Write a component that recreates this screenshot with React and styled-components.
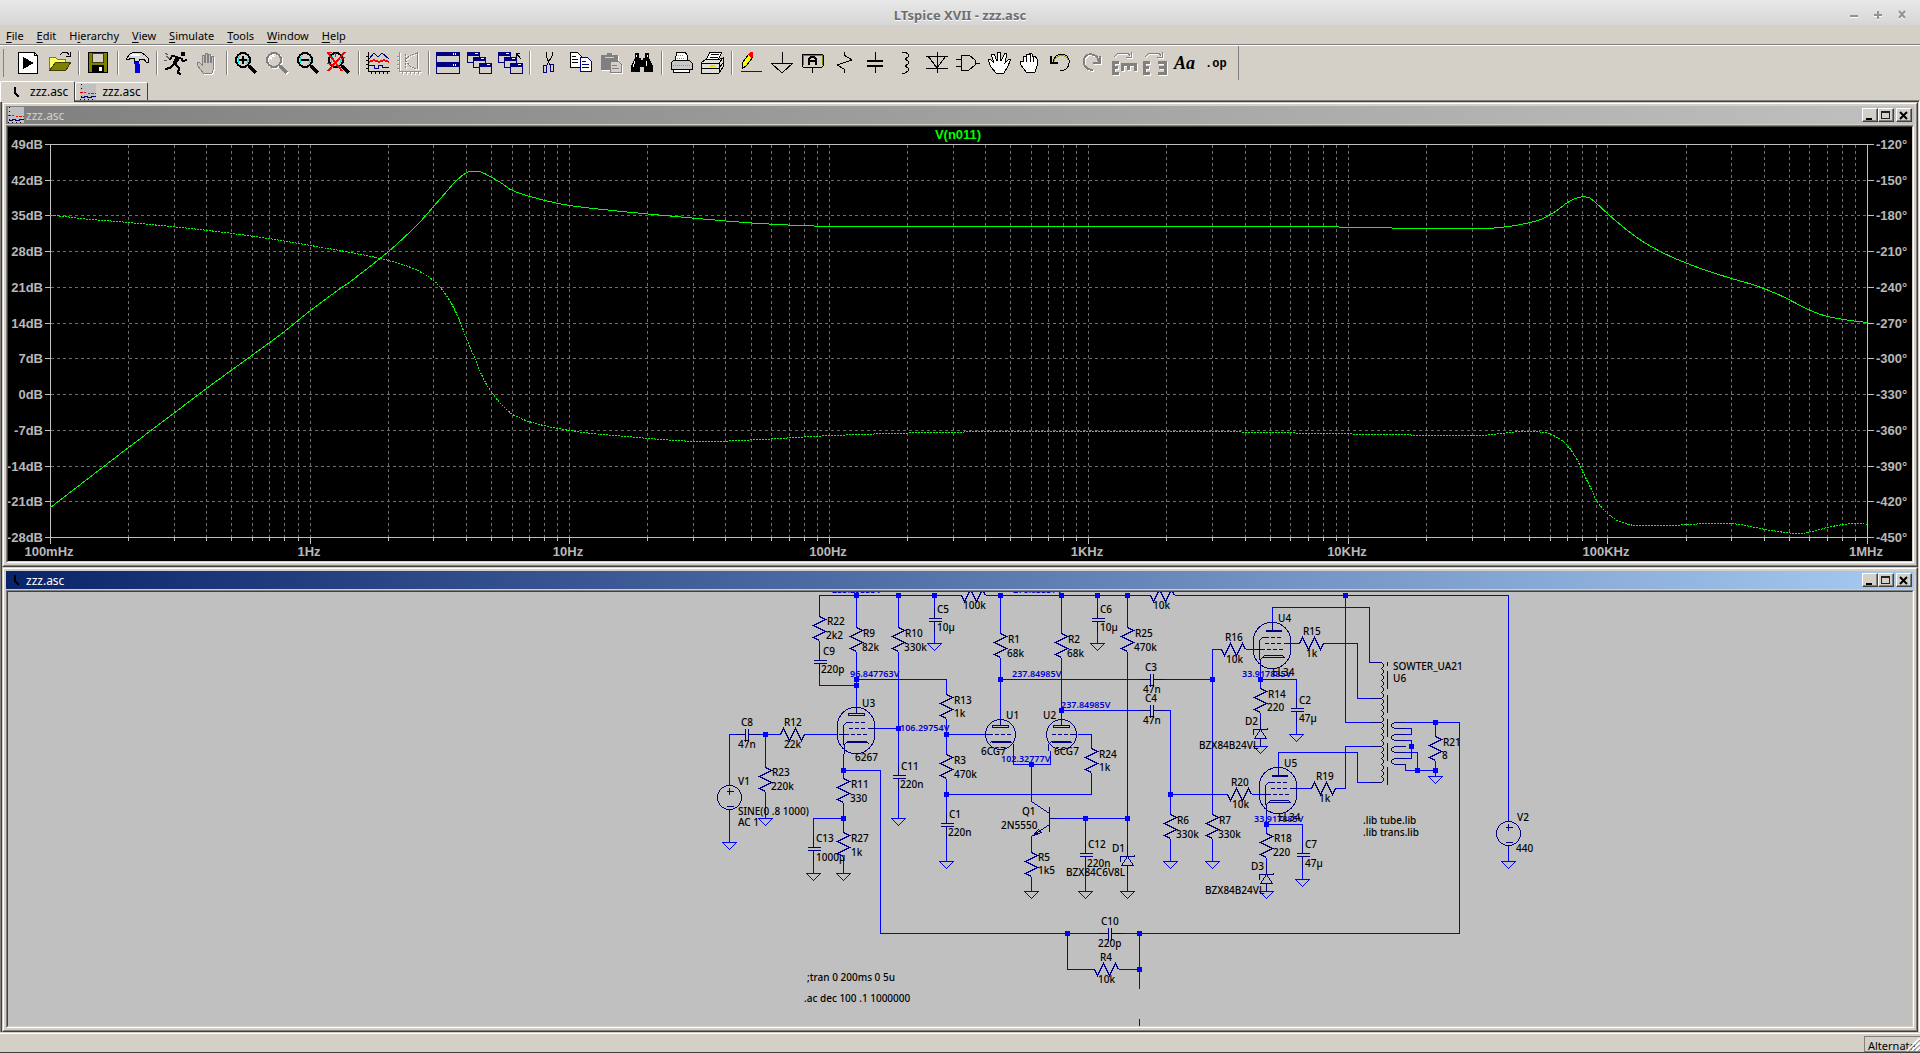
import React from "react";
import styled, { createGlobalStyle } from "styled-components";

const FACE = "#d4d0c8";
const SHADOW = "#808080";
const DARK = "#404040";

/* ---------- toolbar icons, each one drawn in a 24x24 box ---------- */

const Lens = ({ children }) => (
  <>
    <path d="M15 15L22 22" stroke="#000" strokeWidth="3" />
    <circle cx="9" cy="9" r="7" fill={FACE} stroke="#000" strokeWidth="2" />
    <path d="M5 12a5 5 0 0 1 1-7M12 13a5 5 0 0 0 2-5" stroke="#00e0e0" fill="none" />
    {children}
  </>
);

const Cascade = () => (
  <>
    {[[0, 1], [6, 6], [12, 12]].map(([x, y]) => (
      <g key={x}>
        <rect x={x} y={y} width="12" height="10" fill={FACE} stroke="#000080" />
        <rect x={x} y={y} width="12" height="4" fill="#000080" />
        <rect x={x + 8} y={y + 1} width="3" height="1" fill="#fff" />
      </g>
    ))}
  </>
);

const Axes = ({ color }) => (
  <path d="M2 1V20H24M0 5H2M0 9H2M0 13H2M0 17H2M5 20V23M9 20V23M13 20V23M17 20V23M21 20V23" stroke={color} fill="none" />
);

const icons = {
  run: (
    <>
      <path d="M2 1H18L21 4V22H2Z" fill="#fff" stroke="#000" />
      <path d="M18 1V4H21" fill="none" stroke="#000" />
      <path d="M7 6L18 12L7 18Z" fill="#000" />
    </>
  ),
  open: (
    <>
      <path d="M2 19V6H8L10 8H18V11H9L3 19Z" fill="#ffff60" stroke="#808000" />
      <path d="M3 19L9 11H24L19 19Z" fill="#808000" stroke="#404000" />
      <path d="M13 4L16 1H20L22 4M23 1V5H19" fill="none" stroke="#000" />
    </>
  ),
  save: (
    <>
      <rect x="2" y="1" width="19" height="20" fill="#808000" stroke="#000" />
      <rect x="6" y="2" width="11" height="9" fill={FACE} stroke="#404000" />
      <rect x="6" y="14" width="12" height="7" fill="#000" />
      <rect x="13" y="16" width="3" height="4" fill="#fff" />
    </>
  ),
  hammer: (
    <>
      <path d="M9 10H14V13H15V22H10V13H9Z" fill="#0000e0" />
      <path d="M1 8L5 3L9 1H16L20 4L23 7V11H21L19 8H15L14 10H9V7H6L3 9Z" fill="#d8d8d8" stroke="#000" />
      <path d="M6 4H15" stroke="#fff" strokeWidth="2" />
    </>
  ),
  runner: (
    <>
      <rect x="17" y="1" width="4" height="4" fill="#000" />
      <path d="M16 6L11 13M17 7L19 10L23 9M14 6L8 5L6 9" fill="none" stroke="#000" strokeWidth="2" />
      <path d="M14 6L10 13" stroke="#000" strokeWidth="4" />
      <path d="M11 13L15 17L14 22L17 23M10 13L6 17L1 18" fill="none" stroke="#000" strokeWidth="2" />
      <path d="M1 2L4 4M2 5L6 8M0 9H3" stroke="#606060" />
    </>
  ),
  halt: (
    <path
      d="M8 22L3 15L2 12L4 11L7 14V4H9V11H10V2H12V11H13V3H15V11H16V5H18V11L19 16L17 22Z"
      fill="#c8c4bc"
      stroke="#808080"
    />
  ),
  zoomIn: (
    <Lens>
      <path d="M9 5V13M5 9H13" stroke="#000" strokeWidth="2" />
    </Lens>
  ),
  pan: (
    <>
      <circle cx="9" cy="9" r="7" fill="none" stroke="#808080" strokeWidth="2" />
      <path d="M15 15L22 22" stroke="#808080" strokeWidth="3" />
      <path d="M5 8a4 4 0 0 1 4-4" stroke="#fff" fill="none" />
    </>
  ),
  zoomOut: (
    <Lens>
      <path d="M5 9H13" stroke="#000" strokeWidth="2" />
    </Lens>
  ),
  zoomFit: (
    <>
      <Lens />
      <path d="M1 2L15 20M18 1L1 20" stroke="#f00" strokeWidth="2" />
      <path d="M0 1H5M0 12L5 14M14 8L18 6M8 2V6" stroke="#f00" />
    </>
  ),
  plot: (
    <>
      <Axes color="#000" />
      <path d="M3 8L8 2L12 6L16 2L23 8" fill="none" stroke="#000080" />
      <path d="M3 11L8 9L13 11L18 9L23 11" fill="none" stroke="#f00" strokeWidth="2" />
      <path d="M3 14H8V17H12V14H16V16H23" fill="none" stroke="#000080" />
    </>
  ),
  smith: (
    <>
      <Axes color="#909090" />
      <path d="M20 2L14 4L8 9L14 16L20 18ZM20 2V18M8 3V17" fill="none" stroke="#808080" strokeDasharray="2 1" />
    </>
  ),
  tile: (
    <>
      <rect x="0" y="1" width="23" height="10" fill={FACE} stroke="#000080" />
      <rect x="0" y="12" width="23" height="10" fill={FACE} stroke="#000080" />
      <path d="M0 3H23M0 14H23" stroke="#000080" strokeWidth="4" />
      <path d="M17 3H21M17 14H21" stroke="#fff" strokeWidth="2" strokeDasharray="1 1" />
    </>
  ),
  cascade: <Cascade />,
  closeAll: (
    <>
      <Cascade />
      <path d="M23 8L18 2M18 6V2H22" fill="none" stroke="#000" />
    </>
  ),
  cut: (
    <>
      <path d="M9 1V5L13 14M15 1V5L10 14" stroke="#000" fill="none" />
      <ellipse cx="8" cy="18" rx="2" ry="4" fill="none" stroke="#000080" />
      <ellipse cx="15" cy="17" rx="2" ry="4" fill="none" stroke="#000080" />
    </>
  ),
  copy: (
    <>
      <path d="M2 1H9L13 5V16H2Z" fill="#fff" stroke="#000" />
      <path d="M4 5H8M4 8H10M4 11H10" stroke="#000" />
      <path d="M12 6H19L23 10V20H12Z" fill="#fff" stroke="#000080" />
      <path d="M14 10H18M14 13H21M14 16H21" stroke="#000080" />
    </>
  ),
  paste: (
    <>
      <path d="M2 4H8V2H13V4H19V19H2Z" fill="#808080" />
      <path d="M6 6H15" stroke={FACE} />
      <path d="M11 10H19L22 13V21H11Z" fill={FACE} stroke="#808080" />
      <path d="M13 14H18M13 17H20" stroke="#808080" />
    </>
  ),
  find: (
    <>
      <path d="M5 2H9V7H11V9H13V7H15V2H19V7L23 15V21H14V16H10V21H1V15L5 7Z" fill="#000" />
      <path d="M6 4V6M17 4V6M5 10L3 16M16 10V15" stroke="#fff" />
    </>
  ),
  print: (
    <>
      <path d="M6 9L8 1H16L18 4V9" fill="#fff" stroke="#000" />
      <path d="M2 12L5 9H20L23 12V18H2Z" fill="#c8c8c8" stroke="#000" />
      <path d="M4 18H20V21H4Z" fill="#fff" stroke="#000" />
      <path d="M9 4H15M8 7H16M4 14H21" stroke="#909090" strokeDasharray="1 1" />
    </>
  ),
  preview: (
    <>
      <path d="M6 9L10 1H22L18 9Z" fill="#fff" stroke="#000" />
      <path d="M11 3H19M10 6H18" stroke="#000" />
      <path d="M1 12L6 8H20L23 7V16L19 22H1Z" fill="#e0e0d8" stroke="#000" />
      <path d="M1 12H19V22M19 12L23 7M1 17H19L23 12" fill="none" stroke="#000" />
      <path d="M10 15H15" stroke="#e0e000" strokeWidth="2" />
    </>
  ),
  wire: (
    <>
      <path d="M3 12L10 3L14 6L7 15L3 18Z" fill="#ff0" stroke="#000" />
      <path d="M9 3L11 1H14V5L12 7Z" fill="#f00" />
      <path d="M2 20H23" stroke="#0000ff" />
    </>
  ),
  ground: <path d="M12 1V12M1 12H23L12 22Z" fill="none" stroke="#000" />,
  label: (
    <>
      <rect x="1" y="3" width="21" height="13" rx="1" fill={FACE} stroke="#000" />
      <path d="M2 14V4H21V14" fill="none" stroke="#808000" />
      <path d="M11 16V22" stroke="#000" />
      <path d="M8 14V8L10 6H13L15 8V14M8 10H15" stroke="#000" strokeWidth="2" fill="none" />
    </>
  ),
  resistor: <path d="M12 1V4L20 9L5 14L12 18V22" fill="none" stroke="#000" />,
  capacitor: (
    <>
      <path d="M12 1V9M12 15V22" stroke="#000" />
      <path d="M4 10H20M4 15H20" stroke="#000" strokeWidth="2" />
    </>
  ),
  inductor: <path d="M8 1H11L14 3V6L11 8L14 10V13L11 15L14 17V20L11 22H8" fill="none" stroke="#000" />,
  diode: <path d="M12 1V22M1 5H23M3 5L12 17L21 5M1 17H23" fill="none" stroke="#000" />,
  gate: <path d="M5 4H13L19 9V14L13 19H5ZM0 8H5M0 15H5M19 12H24" fill="none" stroke="#000" />,
  move: (
    <path
      d="M9 22L4 16L1 9L3 8L7 12L4 3H7L10 10L10 1H13L14 10L18 2H20L18 12L22 8H24L20 17L17 22Z"
      fill="#fff"
      stroke="#000"
    />
  ),
  drag: <path d="M8 21L3 14L2 10L5 10V5H8V3H11V2L14 3V5H17L19 8V15L17 21Z M8 5V11M12 3V11M15 5V11" fill="#fff" stroke="#000" />,
  undo: (
    <>
      <path d="M4 11C6 1 18 1 20 9C21 15 17 20 11 20" fill="none" stroke="#000" />
      <path d="M5 10C8 3 17 3 19 9" fill="none" stroke="#a0a000" />
      <path d="M2 5V12H9" fill="none" stroke="#000" strokeWidth="2" />
    </>
  ),
  redo: (
    <>
      <path d="M19 11C17 1 5 1 4 9C3 15 7 19 13 19" fill="none" stroke="#808080" strokeWidth="2" />
      <path d="M20 5V12H13" fill="none" stroke="#808080" strokeWidth="2" />
    </>
  ),
  rotate: (
    <>
      <path d="M3 6L7 2H17L19 5M20 1V6H15" fill="none" stroke="#808080" />
      <path d="M8 11H2V22H8M2 16H7M11 20V13H24V20M17 13V19" fill="none" stroke="#808080" strokeWidth="3" />
    </>
  ),
  mirror: (
    <>
      <path d="M3 6L7 2H17L19 5M20 1V6H15" fill="none" stroke="#808080" />
      <path d="M8 11H2V22H8M2 16H7M16 11H23V22H16M23 16H17" fill="none" stroke="#808080" strokeWidth="3" />
    </>
  ),
};

const toolGroups = [
  ["run", "open"],
  ["save"],
  ["hammer"],
  ["runner", "halt"],
  ["zoomIn", "pan", "zoomOut", "zoomFit"],
  ["plot", "smith"],
  ["tile", "cascade", "closeAll"],
  ["cut", "copy", "paste", "find"],
  ["print", "preview"],
  [
    "wire", "ground", "label", "resistor", "capacitor", "inductor", "diode", "gate",
    "move", "drag", "undo", "redo", "rotate", "mirror", "text", "directive",
  ],
];

const disabledTools = ["halt", "pan", "smith", "paste", "redo", "rotate", "mirror"];

const SchematicIcon = () => (
  <svg width="16" height="16" viewBox="0 0 16 16">
    <path d="M7 3V9L11 13" stroke="#000" strokeWidth="2" fill="none" shapeRendering="crispEdges" />
  </svg>
);

const PlotIcon = () => (
  <svg width="16" height="16" viewBox="0 0 16 16" shapeRendering="crispEdges">
    <rect width="16" height="16" fill="#c0c0c0" />
    <path d="M0 9L4 8L8 10L12 9L16 9" stroke="#f00" strokeDasharray="3 1" fill="none" />
    <path d="M1 13H4V12H7V13H11V12H16" stroke="#000080" fill="none" />
    <path d="M1 0V16M0 15H16" stroke="#000" strokeDasharray="1 3" />
  </svg>
);

/* ---------- waveform pane ---------- */

const PLOT = { left: 50, right: 1867, top: 144, bottom: 537 };
const GAIN_LABELS = [49, 42, 35, 28, 21, 14, 7, 0, -7, -14, -21, -28];
const FREQ_LABELS = ["100mHz", "1Hz", "10Hz", "100Hz", "1KHz", "10KHz", "100KHz", "1MHz"];

const gain = [
  [50, 507], [128, 447], [206, 388], [232, 369], [280, 334], [310, 310], [337, 290], [350, 281],
  [388, 251], [418, 223], [433, 206], [447, 190], [456, 180], [466, 172], [470, 171], [478, 171],
  [484, 173], [500, 182], [510, 189], [526, 195], [563, 204], [612, 210], [686, 217], [759, 223],
  [833, 226], [931, 226], [1102, 226], [1298, 226], [1420, 228], [1440, 228], [1482, 228],
  [1500, 227], [1520, 224], [1540, 219], [1555, 211], [1567, 202], [1578, 197], [1588, 197],
  [1595, 202], [1608, 214], [1627, 230], [1647, 244], [1670, 256], [1687, 263], [1703, 269],
  [1731, 278], [1755, 285], [1780, 295], [1810, 310], [1827, 316], [1850, 320], [1867, 322],
];

const phase = [
  [50, 215], [64, 216], [80, 218], [128, 222], [190, 228], [232, 233], [268, 238], [310, 245],
  [350, 252], [388, 260], [415, 269], [433, 280], [443, 291], [452, 305], [459, 320], [466, 338],
  [474, 357], [481, 374], [488, 387], [500, 403], [514, 415], [539, 424], [576, 431], [625, 436],
  [698, 441], [759, 439], [833, 435], [931, 432], [1041, 431], [1200, 431], [1322, 433],
  [1445, 435], [1480, 435], [1500, 433], [1520, 431], [1533, 431], [1548, 433], [1560, 439],
  [1567, 445], [1576, 458], [1583, 473], [1590, 487], [1596, 500], [1605, 511], [1615, 519],
  [1625, 523], [1635, 525], [1670, 525], [1687, 524], [1710, 523], [1730, 523], [1745, 525],
  [1765, 529], [1785, 532], [1800, 533], [1812, 531], [1827, 527], [1843, 524], [1857, 523],
  [1867, 524],
];

// Catmull-Rom through the sample points
const curve = (pts) => {
  let d = `M${pts[0][0]} ${pts[0][1]}`;
  for (let i = 0; i < pts.length - 1; i++) {
    const p0 = pts[i - 1] || pts[i];
    const p1 = pts[i];
    const p2 = pts[i + 1];
    const p3 = pts[i + 2] || p2;
    const s = (p2[0] - p1[0]) / 3;
    const m1 = (p2[1] - p0[1]) / (p2[0] - p0[0]);
    const m2 = (p3[1] - p1[1]) / (p3[0] - p1[0]);
    d += `C${p1[0] + s} ${p1[1] + m1 * s} ${p2[0] - s} ${p2[1] - m2 * s} ${p2[0]} ${p2[1]}`;
  }
  return d;
};

const decade = (PLOT.right - PLOT.left) / 7;
const rowStep = (PLOT.bottom - PLOT.top) / 11;

// lines run through pixel centres so that they stay one pixel wide
const PIXEL_CENTRE = "translate(0.5 0.5)";

const Waveform = () => {
  const minor = [];
  for (let d = 0; d < 7; d++) {
    for (let n = 2; n <= 10; n++) {
      minor.push(Math.round(PLOT.left + decade * (d + Math.log10(n))));
    }
  }
  minor.pop();

  return (
    <Drawing viewBox="8 127 1904 434" role="img" aria-label="V(n011) frequency response">
      <g shapeRendering="crispEdges" fill="none" transform={PIXEL_CENTRE}>
        <g stroke="#707070" strokeDasharray="3 3">
          {minor.map((x) => (
            <path key={x} d={`M${x} ${PLOT.top}V${PLOT.bottom}`} />
          ))}
          {GAIN_LABELS.slice(1, -1).map((v, i) => (
            <path key={v} d={`M${PLOT.left} ${Math.round(PLOT.top + rowStep * (i + 1))}H${PLOT.right}`} />
          ))}
        </g>
        <g stroke="#c0c0c0">
          <path d="M44 144H1873M44 537H1873M50 144V543M1867 144V543" />
          {minor.map((x) => (
            <path key={x} d={`M${x} 537v3`} />
          ))}
          {FREQ_LABELS.map((f, i) => (
            <path key={f} d={`M${Math.round(PLOT.left + decade * i)} 537v6`} />
          ))}
          {GAIN_LABELS.map((v, i) => (
            <path key={v} d={`M44 ${Math.round(PLOT.top + rowStep * i)}h6M1867 ${Math.round(PLOT.top + rowStep * i)}h6`} />
          ))}
        </g>
        <path d={curve(gain)} stroke="#00ff00" />
        <path d={curve(phase)} stroke="#00ff00" strokeDasharray="2 1" />
      </g>
      <AxisText x="958" y="139" textAnchor="middle" $trace>
        V(n011)
      </AxisText>
      {GAIN_LABELS.map((v, i) => (
        <React.Fragment key={v}>
          <AxisText x="43" y={Math.round(149 + rowStep * i)} textAnchor="end">
            {v}dB
          </AxisText>
          <AxisText x="1876" y={Math.round(149 + rowStep * i)}>
            {-120 - 30 * i}°
          </AxisText>
        </React.Fragment>
      ))}
      {FREQ_LABELS.map((f, i) => (
        <AxisText key={f} x={Math.round(PLOT.left + decade * i) - 1} y="556" textAnchor="middle">
          {f}
        </AxisText>
      ))}
    </Drawing>
  );
};

/* ---------- schematic pane ---------- */

const wires =
  "M819 616V595H961M985 595H1150M1174 595H1508V821M819 640V649M819 674V685H856" +
  "M856 595V627M856 651V707M898 595V627M898 651V764M898 789V818M934 595V607M934 631V643" +
  "M856 679H946V694M946 718V754M946 734H985M946 778V812M946 836V861M875 728H898" +
  "M729 785V734H736M758 734H780M804 734H837M765 734V767M765 791V818M729 809V842" +
  "M843 753V778M843 770H880V933M843 802V832M843 818H813V836M813 861V873M843 856V873" +
  "M1000 595V633M1000 657V718M1061 595V633M1061 657V718M1097 595V607M1097 631V643" +
  "M1127 595V627M1127 651V844M1127 873V891M1000 679H1140M1163 679H1212M1061 710H1140M1163 710H1170V814" +
  "M1170 838V861M1077 734H1091V748M1091 772V794H946M1013 750V764H1050V750M1031 764V801" +
  "M1055 818H1127M1031 836V852M1031 876V891M1085 818V842M1085 867V891" +
  "M1221 649H1212V814M1212 838V861M1245 649H1254M1272 622V607H1369V662H1372M1290 643H1299" +
  "M1323 643H1357V698H1370M1345 595V722H1370M1260 668V688M1260 679H1296V698M1296 722V734" +
  "M1260 712V718M1170 794H1227M1251 794H1260M1278 767V752H1357V782H1370M1296 788H1311" +
  "M1335 788H1345V746H1370M1266 813V833M1266 824H1302V842M1302 867V879M1266 857V862" +
  "M1405 722H1459V933H1120M1405 728H1411V734H1405M1405 740H1411V758H1405M1405 752H1417V770" +
  "M1405 764V770H1435M1435 722V736M1435 760V776M1508 845V861" +
  "M880 933H1098M1067 933V969H1094M1118 969H1139M1139 933V988M1139 1018V1026";

const junctions = [
  [856, 595], [898, 595], [934, 595], [1000, 595], [1061, 595], [1097, 595], [1127, 595], [1345, 595],
  [856, 679], [856, 685], [898, 728], [946, 734], [946, 794], [765, 734], [843, 770], [843, 818],
  [1000, 679], [1061, 710], [1031, 764], [1085, 818], [1127, 818], [1170, 794], [1212, 679],
  [1260, 679], [1266, 824], [1435, 722], [1411, 746], [1417, 770], [1435, 770],
  [1067, 933], [1139, 933], [1139, 969],
];

const grounds = [
  [934, 643], [1097, 643], [898, 818], [765, 818], [729, 842], [813, 873], [843, 873], [946, 861],
  [1031, 891], [1085, 891], [1127, 891], [1170, 861], [1212, 861], [1260, 746], [1296, 734],
  [1302, 879], [1266, 891], [1435, 776], [1508, 861],
];

// top of the zigzag
const resistors = [
  [819, 616], [856, 627], [898, 627], [946, 694], [946, 754], [765, 767], [843, 778], [843, 832],
  [1000, 633], [1061, 633], [1127, 627], [1091, 748], [1031, 852], [1170, 814], [1212, 814],
  [1260, 688], [1266, 833], [1435, 736],
];

// left end of the zigzag, third value is the first swing direction
const flatResistors = [
  [780, 734, -1], [961, 595, 1], [1150, 595, 1], [1221, 649, 1], [1299, 643, -1], [1227, 794, 1],
  [1311, 788, -1], [1094, 969, 1],
];

const capacitors = [
  [934, 618], [819, 660], [898, 775], [813, 847], [946, 823], [1097, 618], [1085, 853],
  [1296, 708], [1302, 853],
];

const flatCapacitors = [[745, 734], [1150, 679], [1150, 710], [1108, 933]];

const zeners = [[1127, 856], [1260, 729], [1266, 874]];

const labels = [
  [827, 625, "R22"], [826, 639, "2k2"], [823, 655, "C9"], [821, 673, "220p"], [863, 637, "R9"],
  [862, 651, "82k"], [905, 637, "R10"], [904, 651, "330k"], [937, 613, "C5"], [937, 631, "10µ"],
  [963, 609, "100k"], [954, 704, "R13"], [954, 717, "1k"], [954, 764, "R3"], [954, 778, "470k"],
  [949, 818, "C1"], [948, 836, "220n"], [901, 770, "C11"], [900, 788, "220n"], [862, 707, "U3"],
  [855, 761, "6267"], [851, 788, "R11"], [850, 802, "330"], [816, 842, "C13"], [816, 861, "1000µ"],
  [851, 842, "R27"], [851, 856, "1k"], [784, 726, "R12"], [784, 748, "22k"], [772, 776, "R23"],
  [771, 790, "220k"], [741, 726, "C8"], [738, 748, "47n"], [738, 785, "V1"],
  [738, 815, "SINE(0 .8 1000)"], [738, 826, "AC 1"],
  [1008, 643, "R1"], [1007, 657, "68k"], [1068, 643, "R2"], [1067, 657, "68k"], [1100, 613, "C6"],
  [1100, 631, "10µ"], [1135, 637, "R25"], [1134, 651, "470k"], [1153, 609, "10k"], [1145, 671, "C3"],
  [1143, 693, "47n"], [1145, 702, "C4"], [1143, 724, "47n"], [1006, 719, "U1"], [981, 755, "6CG7"],
  [1043, 719, "U2"], [1054, 755, "6CG7"], [1099, 758, "R24"], [1099, 771, "1k"], [1022, 815, "Q1"],
  [1001, 829, "2N5550"], [1038, 861, "R5"], [1038, 874, "1k5"], [1088, 848, "C12"],
  [1087, 867, "220n"], [1112, 852, "D1"], [1066, 876, "BZX84C6V8L"], [1177, 824, "R6"],
  [1176, 838, "330k"], [1219, 824, "R7"], [1218, 838, "330k"],
  [1225, 641, "R16"], [1226, 663, "10k"], [1278, 622, "U4"], [1303, 635, "R15"], [1306, 657, "1k"],
  [1272, 676, "EL34"], [1268, 698, "R14"], [1267, 711, "220"], [1299, 704, "C2"], [1299, 722, "47µ"],
  [1245, 725, "D2"], [1199, 749, "BZX84B24VL"], [1231, 786, "R20"], [1232, 808, "10k"],
  [1284, 767, "U5"], [1316, 780, "R19"], [1319, 802, "1k"], [1278, 821, "EL34"], [1274, 842, "R18"],
  [1273, 856, "220"], [1305, 848, "C7"], [1305, 867, "47µ"], [1251, 870, "D3"],
  [1205, 894, "BZX84B24VL"], [1443, 746, "R21"], [1442, 759, "8"], [1393, 670, "SOWTER_UA21"],
  [1393, 682, "U6"], [1363, 824, ".lib tube.lib"], [1363, 836, ".lib trans.lib"], [1517, 821, "V2"],
  [1516, 852, "440"], [1101, 925, "C10"], [1098, 947, "220p"], [1100, 961, "R4"], [1098, 983, "10k"],
  [807, 981, ";tran 0 200ms 0 5u"], [804, 1002, ".ac dec 100 .1 1000000"],
];

const voltages = [
  [832, 593, "253.29335V"], [1013, 593, "276.83337V"], [850, 677, "96.847763V"],
  [900, 731, "106.29754V"], [1012, 677, "237.84985V"], [1061, 708, "237.84985V"],
  [1001, 762, "102.32777V"], [1242, 677, "33.917885V"], [1254, 822, "33.917885V"],
];

const Triode = ({ x, flip }) => (
  <g transform={`translate(${x} 734)${flip ? " scale(-1 1)" : ""}`}>
    <circle r="15" />
    <path d="M0 -16V-9M-8 -9H8V-7H-8ZM-15 0H-12" />
    <path d="M-12 0H10" strokeDasharray="4 2" />
    <path d="M-9 7H10" strokeWidth="2" />
    <path d="M-9 7L-11 9M10 7L13 10V16" />
  </g>
);

const Pentode = ({ x, y, solidPlate }) => (
  <g transform={`translate(${x} ${y})`}>
    <rect x="-19" y="0" width="37" height="46" rx="18" />
    {solidPlate ? (
      <>
        <path d="M0 0V7M-10 35L-8 33H10L13 36M-11 35H12M-12 46V37L-10 35" />
        <path d="M-7 8H9" strokeWidth="2" />
      </>
    ) : (
      <>
        <path d="M0 0V6M-8 6H8V8H-8ZM-12 46V37L-10 35M10 34L13 37" />
        <path d="M-10 34H10" strokeWidth="2" />
      </>
    )}
    <path d="M-8 15H-10L-13 18V37M11 21H19M-18 27H-12" />
    <path d="M-8 15H10M-8 21H10M-12 27H10" strokeDasharray="4 2" />
  </g>
);

const Source = ({ x, y }) => (
  <g transform={`translate(${x} ${y})`}>
    <circle r="12" />
    <path d="M0 -10V-3M-3 -6H4M-3 9H4M0 12V15M0 -12V-15" />
  </g>
);

const Schematic = () => (
  <Drawing viewBox="8 592 1904 434" role="img" aria-label="Amplifier schematic">
    <g shapeRendering="crispEdges" fill="none" transform={PIXEL_CENTRE}>
      <path d={wires} stroke="#0000ff" />
      {grounds.map(([x, y]) => (
        <path key={`${x}-${y}`} d={`M${x - 7} ${y}H${x + 7}L${x} ${y + 7}Z`} stroke="#0000ff" />
      ))}
      <g stroke="#000080">
        {resistors.map(([x, y]) => (
          <path key={`${x}-${y}`} d={`M${x} ${y}l6 3l-12 6l12 6l-12 6l6 3`} />
        ))}
        {flatResistors.map(([x, y, s]) => (
          <path key={`${x}-${y}`} d={`M${x} ${y}l3 ${6 * s}l6 ${-12 * s}l6 ${12 * s}l6 ${-12 * s}l3 ${6 * s}`} />
        ))}
        {capacitors.map(([x, y]) => (
          <path key={`${x}-${y}`} d={`M${x} ${y - 11}V${y}M${x - 6} ${y}h13M${x - 6} ${y + 3}h13M${x} ${y + 3}v11`} />
        ))}
        {flatCapacitors.map(([x, y]) => (
          <path key={`${x}-${y}`} d={`M${x - 11} ${y}H${x}M${x} ${y - 6}v13M${x + 3} ${y - 6}v13M${x + 3} ${y}h11`} />
        ))}
        {zeners.map(([x, y]) => (
          <path
            key={x}
            d={`M${x} ${y - 12}V${y}M${x - 7} ${y + 5}V${y}H${x + 6}L${x + 8} ${y - 1}M${x} ${y}L${x - 6} ${y + 9}H${x + 6}ZM${x} ${y + 9}v8`}
          />
        ))}
        <Triode x={1000} />
        <Triode x={1061} flip />
        <Pentode x={856} y={707} />
        <Pentode x={1272} y={622} solidPlate />
        <Pentode x={1278} y={767} solidPlate />
        <Source x={729} y={797} />
        <Source x={1508} y={833} />
        {/* Q1 */}
        <path d="M1031 801L1049 813M1049 806V831M1049 818H1056M1049 824L1031 836M1033 835L1038 829L1041 832Z" />
        {/* output transformer */}
        <path d={`M1369 662H1381${"q4 3 0 6".repeat(20)}H1369M1369 698H1381M1369 722H1381M1369 746H1381`} />
        <path d="M1387 661v4M1387 670v18M1387 694v18M1387 718v18M1387 742v18M1387 766v18" />
        {[722, 734, 746, 758].map((y) => (
          <path key={y} d={`M1405 ${y}H1394L1391 ${y + 2}V${y + 4}L1394 ${y + 6}H1405`} />
        ))}
      </g>
    </g>
    {junctions.map(([x, y]) => (
      <rect key={`${x}-${y}`} x={x - 2} y={y - 2} width="5" height="5" fill="#0000ff" />
    ))}
    {voltages.map(([x, y, t]) => (
      <PartText key={`${x}-${y}`} x={x} y={y} $voltage>
        {t}
      </PartText>
    ))}
    {labels.map(([x, y, t]) => (
      <PartText key={`${x}-${y}`} x={x} y={y}>
        {t}
      </PartText>
    ))}
  </Drawing>
);

/* ---------- application frame ---------- */

const MdiWindow = ({ title, icon, active, dark, children }) => (
  <Frame>
    <FrameInner>
      <Caption $active={active}>
        {icon}
        <CaptionText>{title}</CaptionText>
        <CaptionButton aria-label="Minimize">
          <svg width="10" height="9" shapeRendering="crispEdges">
            <path d="M1 8H7" stroke="#000" strokeWidth="2" />
          </svg>
        </CaptionButton>
        <CaptionButton aria-label="Maximize">
          <svg width="10" height="9" shapeRendering="crispEdges">
            <rect width="9" height="8" fill="#202020" />
            <rect x="1" y="2" width="7" height="5" fill={FACE} />
          </svg>
        </CaptionButton>
        <CaptionButton aria-label="Close" $last>
          <svg width="10" height="9">
            <path d="M1 1L8 8M8 1L1 8" stroke="#000" strokeWidth="2" />
          </svg>
        </CaptionButton>
      </Caption>
      <Client $dark={dark}>{children}</Client>
    </FrameInner>
  </Frame>
);

const menus = ["File", "Edit", "Hierarchy", "View", "Simulate", "Tools", "Window", "Help"];
// position of the underlined letter
const hotkey = { Hierarchy: 1 };

const App = () => {
  return (
    <Page>
      <GlobalStyle />
      <TitleBar>
        <span />
        <Title>LTspice XVII - zzz.asc</Title>
        <TitleButtons>
          <TitleButton aria-label="Minimize">
            <path d="M0 6H8" />
          </TitleButton>
          <TitleButton aria-label="Maximize">
            <path d="M0 5H8M4 1V9" />
          </TitleButton>
          <TitleButton aria-label="Close">
            <path d="M1 1L7 8M7 1L1 8" />
          </TitleButton>
        </TitleButtons>
      </TitleBar>
      <MenuBar>
        {menus.map((m) => {
          const i = hotkey[m] || 0;
          return (
            <MenuItem key={m}>
              {m.slice(0, i)}
              <u>{m[i]}</u>
              {m.slice(i + 1)}
            </MenuItem>
          );
        })}
      </MenuBar>
      <ToolBar>
        <Grip />
        {toolGroups.map((group) => (
          <ToolGroup key={group[0]}>
            {group.map((name) => (
              <Tool key={name} aria-label={name} disabled={disabledTools.includes(name)}>
                <svg width="24" height="24" viewBox="0 0 24 24" shapeRendering="crispEdges">
                  {name === "text" && <ToolText x="1" y="18">Aa</ToolText>}
                  {name === "directive" && <ToolText x="1" y="16" $plain>.op</ToolText>}
                  {icons[name]}
                </svg>
              </Tool>
            ))}
          </ToolGroup>
        ))}
      </ToolBar>
      <Tabs>
        <Tab $active>
          <SchematicIcon />
          zzz.asc
        </Tab>
        <Tab>
          <PlotIcon />
          zzz.asc
        </Tab>
      </Tabs>
      <Workspace>
        <MdiWindow title="zzz.asc" icon={<PlotIcon />} dark>
          <Waveform />
        </MdiWindow>
        <MdiWindow title="zzz.asc" icon={<SchematicIcon />} active>
          <Schematic />
        </MdiWindow>
      </Workspace>
      <StatusBar>
        <StatusCell>
          Alternate
          <SizeGrip width="13" height="13" viewBox="0 0 14 14">
            <path d="M0 14L14 0M5 14L14 5M10 14L14 10" stroke="#fff" strokeWidth="2" />
            <path d="M2 14L14 2M7 14L14 7M12 14L14 12" stroke={SHADOW} />
          </SizeGrip>
        </StatusCell>
      </StatusBar>
    </Page>
  );
};

const TitleButton = ({ children, ...rest }) => (
  <PlainButton {...rest}>
    <svg width="8" height="10" viewBox="0 0 8 10" stroke="#929292" strokeWidth="2" fill="none">
      {children}
    </svg>
  </PlainButton>
);

const GlobalStyle = createGlobalStyle`
  body {
    margin: 0;
    background: ${FACE};
    font-family: "Noto Sans", "Open Sans", sans-serif;
    font-size: 12px;
    color: #000;
  }
  * {
    box-sizing: border-box;
  }
  button {
    font: inherit;
    color: inherit;
    border: 0;
    padding: 0;
    background: none;
  }
`;

const Page = styled.div`
  display: flex;
  flex-direction: column;
  height: 100vh;
  min-height: 600px;
`;

const TitleBar = styled.header`
  display: grid;
  grid-template-columns: 1fr auto 1fr;
  align-items: center;
  height: 25px;
  padding-top: 4px;
  background: linear-gradient(#e8e8e8, #d6d6d6);
`;

const Title = styled.h1`
  margin: 0;
  font-size: 13px;
  font-weight: bold;
  line-height: 20px;
  color: #6e6e6e;
  text-shadow: 0 1px 0 #fff;
`;

const TitleButtons = styled.div`
  display: flex;
  justify-content: flex-end;
  gap: 16px;
  padding-right: 14px;
`;

const PlainButton = styled.button`
  display: flex;

  svg {
    filter: drop-shadow(0 1px 0 #fff);
  }
`;

const MenuBar = styled.nav`
  display: flex;
  gap: 13px;
  height: 20px;
  padding-left: 6px;
  border-bottom: 1px solid ${SHADOW};
`;

const MenuItem = styled.button`
  font-size: 11px;
  line-height: 22px;

  u {
    text-underline-offset: 2px;
  }
`;

const ToolBar = styled.div`
  display: flex;
  align-items: center;
  height: 36px;
  padding-bottom: 1px;
  border-top: 1px solid #fff;
`;

const Grip = styled.div`
  width: 4px;
  height: 28px;
  margin-right: 8px;
  border-right: 1px solid ${SHADOW};
`;

const ToolGroup = styled.div`
  display: flex;
  align-items: center;

  & + &::before {
    content: "";
    width: 1px;
    height: 24px;
    margin: 0 2px 0 4px;
    background: ${SHADOW};
    border-right: 1px solid #fff;
  }

  &:last-child {
    align-self: stretch;
    padding-right: 7px;
    border-right: 1px solid ${SHADOW};
  }
`;

const Tool = styled.button`
  display: flex;
  justify-content: center;
  width: 31px;

  svg {
    overflow: visible;
  }

  &:disabled svg {
    filter: drop-shadow(1px 1px 0 #fff);
  }
`;

const ToolText = styled.text`
  font-family: ${(p) => (p.$plain ? '"Liberation Mono"' : '"Liberation Serif"')}, serif;
  font-size: ${(p) => (p.$plain ? "12px" : "18px")};
  font-style: ${(p) => (p.$plain ? "normal" : "italic")};
  font-weight: bold;
`;

const Tabs = styled.div`
  display: flex;
  align-items: flex-end;
  height: 19px;
`;

const Tab = styled.button`
  display: flex;
  align-items: center;
  gap: 6px;
  height: ${(p) => (p.$active ? "21px" : "18px")};
  margin-bottom: ${(p) => (p.$active ? "-2px" : "0")};
  padding: 0 6px 0 ${(p) => (p.$active ? "7px" : "4px")};
  position: relative;
  z-index: 1;
  background: ${FACE};
  border: 1px solid #fff;
  border-right: 1px solid ${DARK};
  border-bottom: 0;
  border-radius: 2px 2px 0 0;
  line-height: 18px;
`;

const Workspace = styled.main`
  display: flex;
  flex: 1;
  flex-direction: column;
  min-height: 0;
  border-top: 1px solid ${SHADOW};
  border-left: 1px solid ${SHADOW};
  border-right: 1px solid #fff;
  box-shadow: inset 1px 1px 0 ${DARK};
  padding: 1px 1px 0;
`;

const Frame = styled.section`
  display: flex;
  flex: 1;
  min-height: 0;
  border: 1px solid ${FACE};
  border-right-color: ${DARK};
  border-bottom-color: ${DARK};
`;

const FrameInner = styled.div`
  display: flex;
  flex: 1;
  flex-direction: column;
  min-width: 0;
  padding: 2px;
  border: 1px solid #fff;
  border-right-color: ${SHADOW};
  border-bottom-color: ${SHADOW};
`;

const Caption = styled.header`
  display: flex;
  flex-shrink: 0;
  align-items: center;
  height: 18px;
  margin-bottom: 1px;
  padding: 0 2px;
  color: ${(p) => (p.$active ? "#fff" : FACE)};
  background: ${(p) =>
    p.$active
      ? "linear-gradient(90deg, #0a246a, #a6caf0)"
      : "linear-gradient(90deg, #808080, #c0c0c0)"};
`;

const CaptionText = styled.h2`
  flex: 1;
  margin: 0 0 0 2px;
  padding-top: 2px;
  font-size: 12px;
  font-weight: normal;
  line-height: 18px;
`;

const CaptionButton = styled.button`
  display: flex;
  align-items: center;
  justify-content: center;
  width: 16px;
  height: 14px;
  margin-left: ${(p) => (p.$last ? "2px" : "0")};
  background: ${FACE};
  border: 1px solid #fff;
  border-right-color: ${DARK};
  border-bottom-color: ${DARK};
  box-shadow: inset -1px -1px 0 ${SHADOW};
`;

const Client = styled.div`
  flex: 1;
  min-height: 0;
  border: 1px solid ${SHADOW};
  border-right-color: #fff;
  border-bottom-color: #fff;
  background: ${(p) => (p.$dark ? "#000" : "#c0c0c0")};

  & > svg {
    border: 1px solid ${DARK};
    border-right-color: ${FACE};
    border-bottom-color: ${FACE};
  }
`;

const Drawing = styled.svg`
  display: block;
  width: 100%;
  height: 100%;
`;

const AxisText = styled.text`
  font-family: "Liberation Sans", Arial, sans-serif;
  font-size: 13px;
  font-weight: bold;
  fill: ${(p) => (p.$trace ? "#00ff00" : "#b8b8b8")};
`;

const PartText = styled.text`
  font-size: ${(p) => (p.$voltage ? "9px" : "10px")};
  font-weight: ${(p) => (p.$voltage ? "600" : "500")};
  fill: ${(p) => (p.$voltage ? "#0000d0" : "#000")};
`;

const StatusBar = styled.footer`
  display: flex;
  justify-content: flex-end;
  height: 21px;
  padding-top: 2px;
  border-top: 1px solid ${FACE};
  border-bottom: 1px solid ${DARK};
  box-shadow: inset 0 1px 0 #fff;
`;

const StatusCell = styled.div`
  position: relative;
  width: 56px;
  margin-top: 1px;
  padding-left: 3px;
  overflow: hidden;
  font-size: 11px;
  line-height: 17px;
  border: 1px solid ${SHADOW};
  border-right: 0;
`;

const SizeGrip = styled.svg`
  position: absolute;
  right: 0;
  bottom: 0;
`;

export default App;
